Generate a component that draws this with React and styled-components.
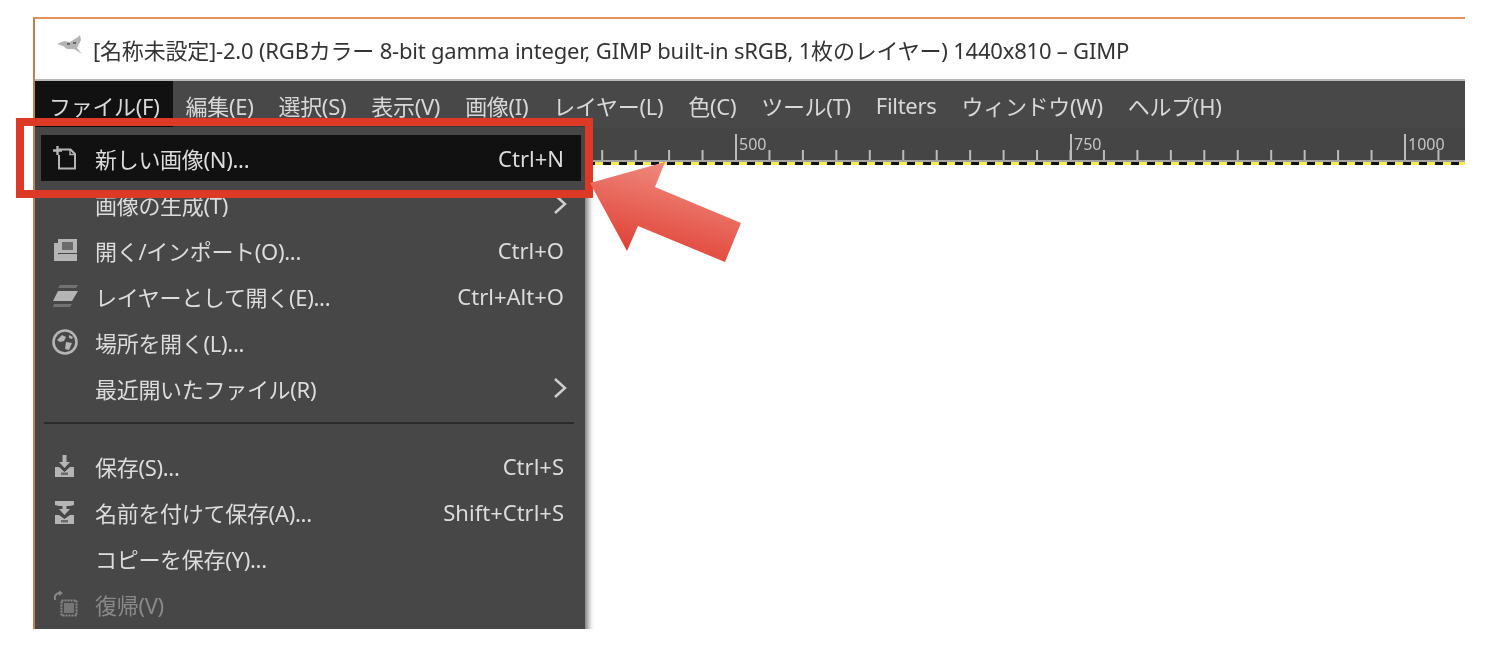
import React from "react";
import styled, { createGlobalStyle } from "styled-components";

const Global = createGlobalStyle`
  html, body { margin: 0; padding: 0; background: #fff; }
  body { font-family: "Noto Sans", "Noto Sans CJK JP", sans-serif; }
`;

const Page = styled.div`
  position: relative;
  width: 1492px;
  height: 646px;
  padding: 17px 27px 17px 33px;
  box-sizing: border-box;
  overflow: hidden;
`;

const Window = styled.div`
  position: relative;
  height: 612px;
  display: flex;
  flex-direction: column;
  border-top: 2px solid #e2925f;
  border-left: 2px solid #c07f52;
  box-sizing: border-box;
  overflow: hidden;
  background: #fff;
`;

const TitleBar = styled.div`
  height: 60px;
  flex: none;
  display: flex;
  align-items: center;
  gap: 10px;
  padding-left: 22px;
  background: #fff;
  color: #333;
  font-size: 22px;
  letter-spacing: -0.2px;
  white-space: nowrap;
  filter: blur(0.35px);
`;

const MenuBar = styled.div`
  height: 49px;
  flex: none;
  display: flex;
  align-items: stretch;
  background: #484848;
  border-top: 2px solid #b9b9b9;
  box-sizing: border-box;
`;

const MenuTitle = styled.div`
  display: flex;
  align-items: center;
  padding: 0 ${p => (p.$active ? "13px" : "0")} 0 ${p => (p.$active ? "14px" : "0")};
  margin-left: ${p => (p.$active ? "0" : p.$first ? "13px" : "25px")};
  background: ${p => (p.$active ? "#111" : "transparent")};
  color: #d8d8d8;
  font-size: 22px;
  letter-spacing: -0.3px;
  white-space: nowrap;
  filter: blur(0.35px);
`;

const Ruler = styled.div`
  height: 37px;
  flex: none;
  background: #454545;
`;

const Canvas = styled.div`
  flex: 1;
  background: #fff;
`;

const DropDown = styled.div`
  position: absolute;
  left: 0;
  top: 108px;
  width: 550px;
  height: 520px;
  padding: 8px 4px 0 6px;
  box-sizing: border-box;
  background: #474747;
  box-shadow: 3px 0 6px rgba(0, 0, 0, 0.55);
`;

const Row = styled.div`
  height: 46px;
  display: flex;
  align-items: center;
  padding: 0 17px 0 10px;
  box-sizing: border-box;
  color: ${p => (p.$disabled ? "#8a8a8a" : "#dcdcdc")};
  background: ${p => (p.$hi ? "#111" : "transparent")};
  font-size: 22px;
  white-space: nowrap;
`;

const IconBox = styled.div`
  width: 28px;
  height: 28px;
  flex: none;
  margin-right: 16px;
  display: flex;
  color: ${p => (p.$disabled ? "#8a8a8a" : "#b5b5b5")};
  filter: blur(0.4px);
`;

const Label = styled.span`
  flex: 1;
  letter-spacing: -0.3px;
  filter: blur(0.35px);
`;

const Shortcut = styled.span`
  filter: blur(0.35px);
`;

const Chevron = styled.svg`
  width: 16px;
  height: 24px;
  margin-right: -4px;
  color: #d0d0d0;
`;

const Separator = styled.div`
  height: 2px;
  margin: 11px 7px 19px 3px;
  background: #2b2b2b;
`;

const Highlight = styled.div`
  position: absolute;
  left: 16px;
  top: 118px;
  width: 577px;
  height: 80px;
  border: 8px solid #dc3a26;
  box-sizing: border-box;
  pointer-events: none;
`;

const Arrow = styled.svg`
  position: absolute;
  left: 580px;
  top: 155px;
  width: 170px;
  height: 115px;
  pointer-events: none;
`;

const Svg = ({ children }) => (
  <svg width="28" height="28" viewBox="0 0 28 28" fill="none">{children}</svg>
);

const NewIcon = () => (
  <Svg>
    <path d="M8 5.5H19.5L24 10V24.5H8V11" stroke="currentColor" strokeWidth="2" />
    <path d="M2 6.5H11M6.5 2V11" stroke="currentColor" strokeWidth="2.4" />
    <path d="M19 5.5V10.5H24" stroke="currentColor" strokeWidth="1.4" />
  </Svg>
);

const OpenIcon = () => (
  <Svg>
    <path d="M3 7h4v14H3zM7 3h19v14H7z" fill="currentColor" />
    <rect x="11" y="6" width="11" height="8" fill="#6b6b6b" />
    <path d="M3 21 8 18H26V25H3Z" fill="currentColor" />
  </Svg>
);

const LayersIcon = () => (
  <Svg>
    <path d="M9 3H27L25 6H7Z" fill="currentColor" opacity=".4" />
    <path d="M7 9H27L21 19H2Z" fill="currentColor" />
    <path d="M3 22H21L19 25H2Z" fill="currentColor" opacity=".4" />
  </Svg>
);

const GlobeIcon = () => (
  <Svg>
    <circle cx="14" cy="14" r="11.5" stroke="currentColor" strokeWidth="2.6" />
    <path d="M6 12 11 7 15 9 13 13 9 14ZM15 14 21 15 18 22 14 21ZM18 7 22 9 21 11 18 10Z" fill="currentColor" />
  </Svg>
);

const SaveIcon = () => (
  <Svg>
    <path d="M11.5 3H15.500V10H19L13.500 16 8 10H11.500Z" fill="currentColor" />
    <path d="M4 15 8 15 13.500 20 19 15H23V25H4Z" fill="currentColor" />
    <rect x="10" y="20.500" width="7" height="2.500" fill="#6b6b6b" />
  </Svg>
);

const SaveAsIcon = () => (
  <Svg>
    <path d="M4 3H23V7L19 8H8L4 7Z" fill="currentColor" />
    <path d="M11.500 8H15.500V11H19L13.500 17 8 11H11.500Z" fill="currentColor" />
    <path d="M4 17H8L13.500 21 19 17H23V26H4Z" fill="currentColor" />
    <rect x="10" y="22" width="7" height="2.500" fill="#6b6b6b" />
  </Svg>
);

const RevertIcon = () => (
  <Svg>
    <path d="M9 3C5 3 3 6 4 10" stroke="currentColor" strokeWidth="2" />
    <path d="M8 0.500 12 3 8 6Z" fill="currentColor" />
    <rect x="10.500" y="10.500" width="15" height="15" stroke="currentColor" strokeWidth="2" strokeDasharray="2 1" />
    <rect x="13" y="13" width="10" height="10" fill="currentColor" opacity=".7" />
  </Svg>
);

const GimpIcon = styled.svg`
  width: 26px;
  height: 20px;
  flex: none;
  margin-top: -8px;
  filter: blur(0.5px);
`;

const rows = [
  { icon: NewIcon, label: "新しい画像(N)...", key: "Ctrl+N", hi: true },
  { label: "画像の生成(T)", sub: true },
  { icon: OpenIcon, label: "開く/インポート(O)...", key: "Ctrl+O" },
  { icon: LayersIcon, label: "レイヤーとして開く(E)...", key: "Ctrl+Alt+O" },
  { icon: GlobeIcon, label: "場所を開く(L)..." },
  { label: "最近開いたファイル(R)", sub: true },
  { sep: true },
  { icon: SaveIcon, label: "保存(S)...", key: "Ctrl+S" },
  { icon: SaveAsIcon, label: "名前を付けて保存(A)...", key: "Shift+Ctrl+S" },
  { label: "コピーを保存(Y)..." },
  { icon: RevertIcon, label: "復帰(V)", disabled: true },
];

const menus = ["編集(E)", "選択(S)", "表示(V)", "画像(I)", "レイヤー(L)", "色(C)", "ツール(T)", "Filters", "ウィンドウ(W)", "ヘルプ(H)"];

// Ruler ticks, window x = page x - 35
const RulerSvg = styled.svg`
  display: block;
  width: 1430px;
  height: 37px;
  filter: blur(0.3px);
`;
const RulerText = styled.text`
  font-family: "Noto Sans", sans-serif;
  font-size: 16px;
  fill: #c4c4c4;
`;

const RulerDrawing = () => {
  const ticks = [];
  for (let i = -16; i < 28; i++) ticks.push(701 + i * 33.45);
  const majors = [701, 1036, 1370];
  return (
    <RulerSvg viewBox="0 0 1430 37">
      <rect x="0" y="32" width="1430" height="2" fill="#a5a5a5" />
      {ticks.map(x => (
        <rect key={x} x={x - 1} y={majors.includes(x) ? 6 : 22} width="2" height={majors.includes(x) ? 26 : 10} fill="#bbb" />
      ))}
      {majors.map(x => (
        <rect key={x} x={x - 1} y="6" width="2" height="26" fill="#bbb" />
      ))}
      <RulerText x="704" y="22">500</RulerText>
      <RulerText x="1039" y="22">750</RulerText>
      <RulerText x="1373" y="22">1000</RulerText>
      <rect x="0" y="34" width="1430" height="3" fill="#111" />
      <path d="M0 35.500H1430" stroke="#f2ee52" strokeWidth="3" strokeDasharray="8 8" />
    </RulerSvg>
  );
};

export default function App() {
  return (
    <Page>
      <Global />
      <Window>
        <TitleBar>
          <GimpIcon viewBox="0 0 26 20">
            <path d="M0 9 7 6 13 7 21 2 23 0 24 5 22 9 20 13 25 19 17 14 10 14 6 11Z" fill="#b4b4b4" />
            <path d="M10 8h3v2h-3zM16 7h3v2h-3z" fill="#666" />
          </GimpIcon>
          <span>[名称未設定]-2.0 (RGBカラー 8-bit gamma integer, GIMP built-in sRGB, 1枚のレイヤー) 1440x810 – GIMP</span>
        </TitleBar>
        <MenuBar>
          <MenuTitle $active>ファイル(F)</MenuTitle>
          {menus.map((m, i) => (
            <MenuTitle key={m} $first={i === 0}>{m}</MenuTitle>
          ))}
        </MenuBar>
        <Ruler><RulerDrawing /></Ruler>
        <Canvas />
        <DropDown>
          {rows.map((r, i) => {
            if (r.sep) return <Separator key={i} />;
            const Icon = r.icon;
            return (
              <Row key={i} $hi={r.hi} $disabled={r.disabled}>
                <IconBox $disabled={r.disabled}>{Icon && <Icon />}</IconBox>
                <Label>{r.label}</Label>
                {r.key && <Shortcut>{r.key}</Shortcut>}
                {r.sub && (
                  <Chevron viewBox="0 0 16 24" fill="none">
                    <path d="M3 3 13 12 3 21" stroke="currentColor" strokeWidth="2.4" />
                  </Chevron>
                )}
              </Row>
            );
          })}
        </DropDown>
      </Window>
      <Highlight />
      <Arrow viewBox="580 155 170 115">
        <defs>
          <linearGradient id="arrowFill" x1="0.7" y1="0" x2="0.3" y2="1">
            <stop offset="0" stopColor="#f09085" />
            <stop offset="1" stopColor="#df3a2e" />
          </linearGradient>
        </defs>
        <path d="M590 183 665 162 655 187 741 223 725 262 638 226 627 251Z" fill="url(#arrowFill)" />
      </Arrow>
    </Page>
  );
}
